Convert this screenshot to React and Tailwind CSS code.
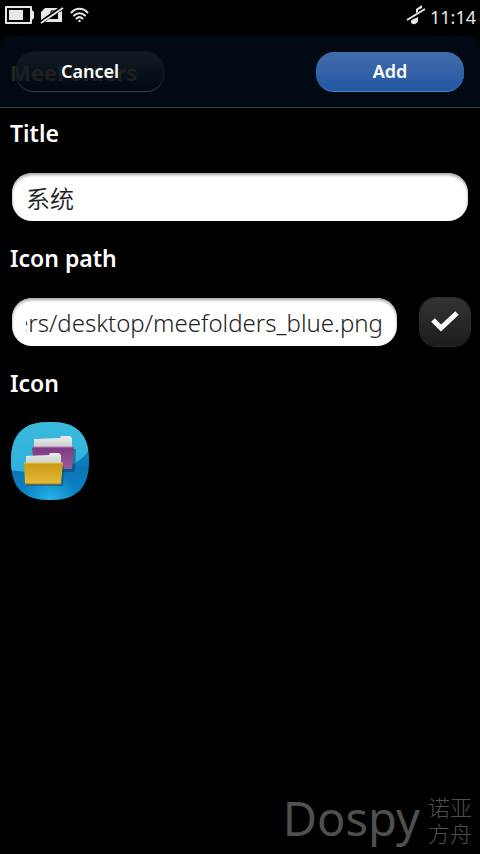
import React, { useEffect, useRef, useState } from 'react';

const BatteryIcon = () => (
  <svg width="30" height="20" viewBox="0 0 30 20" aria-hidden="true">
    <path d="M2 2h25v16H2z" fill="none" stroke="#e9e5e9" strokeWidth="2" strokeLinejoin="round" />
    <path d="M28 5l2 2v6l-2 2z" fill="#e9e5e9" />
    <rect x="5" y="5" width="14" height="10" fill="#e9e5e9" />
  </svg>
);

const NoSimIcon = () => (
  <svg width="24" height="18" viewBox="0 0 24 18" aria-hidden="true">
    <path d="M1 6l4-4h13L1 14z" fill="#e9e5e9" />
    <path d="M22 5v11H5l4-3h9V7z" fill="#e9e5e9" />
    <path d="M11 9V5h4" stroke="#000" strokeWidth="1" fill="none" />
    <path d="M1 17L23 2" stroke="#e9e5e9" strokeWidth="2" />
  </svg>
);

const WifiIcon = () => (
  <svg width="20" height="16" viewBox="0 0 20 16" fill="none" stroke="#e9e5e9" strokeWidth="2" strokeLinecap="round" aria-hidden="true">
    <path d="M1.500 5.500C6 .5 13 .5 17.500 5.500M4 8.500c3-3 8-3 11 0M6.500 11.500c1.800-1.600 4.200-1.600 6 0" />
    <circle cx="9.500" cy="14" r="1.200" fill="#e9e5e9" stroke="none" />
  </svg>
);

const SilentIcon = () => (
  <svg width="20" height="22" viewBox="0 0 20 22" aria-hidden="true">
    <path d="M10 9V5l6-4v3l-4 2v2z" fill="#e9e5e9" />
    <path d="M12 13v4c-1 4-7 4-7 1s3-3 5-4z" fill="#e9e5e9" />
    <path d="M1 16L19 5" stroke="#e9e5e9" strokeWidth="2" />
  </svg>
);

const FolderIcon = () => (
  <svg width="80" height="80" viewBox="0 0 80 80" role="img" aria-label="Folders">
    <defs>
      <linearGradient id="tile" x1="0" y1="0" x2="0" y2="1">
        <stop offset="0" stopColor="#25a5d2" />
        <stop offset="0.6" stopColor="#0b76b8" />
        <stop offset="1" stopColor="#0c83c4" />
      </linearGradient>
      <linearGradient id="gloss" x1="0" y1="0" x2="0" y2="1">
        <stop offset="0" stopColor="#3bbcdc" />
        <stop offset="1" stopColor="#2fb1db" />
      </linearGradient>
      <radialGradient id="glow" cx="0.5" cy="1" r="0.35">
        <stop offset="0" stopColor="#25b4e6" />
        <stop offset="1" stopColor="#25b4e6" stopOpacity="0" />
      </radialGradient>
      <linearGradient id="paper" x1="0" y1="0" x2="0" y2="1">
        <stop offset="0" stopColor="#e9ece9" />
        <stop offset="1" stopColor="#c3cbca" />
      </linearGradient>
      <linearGradient id="purple" x1="0" y1="0" x2="0" y2="1">
        <stop offset="0" stopColor="#7c3a80" />
        <stop offset="1" stopColor="#9a5b9f" />
      </linearGradient>
      <linearGradient id="yellow" x1="0" y1="0" x2="0" y2="1">
        <stop offset="0" stopColor="#c79a17" />
        <stop offset="1" stopColor="#e5ba38" />
      </linearGradient>
      <clipPath id="squircle">
        <path d="M40 2C67 2 79 14 79 41S67 80 40 80 1 68 1 41 13 2 40 2z" />
      </clipPath>
    </defs>
    <g clipPath="url(#squircle)">
      <rect width="80" height="80" fill="url(#tile)" />
      <path d="M0 0h80v28C70 46 45 56 0 50z" fill="url(#gloss)" />
      <rect width="80" height="80" fill="url(#glow)" />
    </g>
    {/* back folder */}
    <path d="M24 29h42l-1 23H26z" fill="#063f66" fillOpacity="0.5" />
    <path d="M24 19l26-1 1-2h9l2 2v11H24z" fill="url(#paper)" />
    <path d="M22 27h42l-2 22H24z" fill="url(#purple)" />
    <path d="M22 27h42" stroke="#b77db9" />
    {/* front folder */}
    <path d="M17 46h37l-1 20H17z" fill="#063f66" fillOpacity="0.5" />
    <path d="M16 36l23-1 1-2h9l2 2v10H16z" fill="url(#paper)" />
    <path d="M14 43h39l-2 21H15z" fill="url(#yellow)" />
    <path d="M14 43h39" stroke="#ebcc5b" />
    <path d="M15 64h36" stroke="#a57c10" />
  </svg>
);

const inputClass =
  "block w-full min-w-0 h-12 px-3.5 rounded-[20px] bg-white text-[#222222] text-[24px] font-['Noto_Sans','Noto_Sans_CJK_SC',sans-serif] shadow-[inset_0_2px_3px_#a8a4a8] outline-none";

const labelClass = 'block h-8 text-[23px] leading-[30px] font-semibold';

const App = () => {
  const [title, setTitle] = useState('系统');
  const [path, setPath] = useState('ers/desktop/meefolders_blue.png');
  const pathRef = useRef(null);

  // Keep the file name visible when the path is longer than the box
  useEffect(() => {
    pathRef.current.scrollLeft = pathRef.current.scrollWidth;
  }, []);

  return (
    <div className="min-h-screen flex flex-col bg-black text-white font-['Noto_Sans','Noto_Sans_CJK_SC',sans-serif]">
      {/* Status bar */}
      <div className="h-9 flex items-center justify-between px-1 pb-1.5">
        <div className="flex items-center gap-1.5">
          <BatteryIcon />
          <NoSimIcon />
          <WifiIcon />
        </div>
        <div className="flex items-center gap-1 text-[#e9e5e9]">
          <SilentIcon />
          <span className="pt-1 text-[18px] leading-6">11:14</span>
        </div>
      </div>

      {/* Sheet header */}
      <header className="relative h-18 flex items-center justify-between px-4 rounded-t-xl bg-[#010a12] border-b border-[#3c4043]">
        <span className="absolute left-2.5 top-5 text-[22px] leading-8 font-bold text-[#2a2421]">MeeFolders</span>
        <button
          type="button"
          className="relative w-[148px] h-10 rounded-[18px] bg-linear-to-b from-[#1b222b]/70 to-[#020a14]/30 border-b border-[#343c48] shadow-[0_0_0_1px_#0b121a] text-lg leading-6 font-semibold"
        >
          Cancel
        </button>
        <button
          type="button"
          className="w-[148px] h-10 rounded-[18px] bg-linear-to-b from-[#416ca9] to-[#2358a4] border-b border-[#4c7fc5] text-lg leading-6 font-semibold"
        >
          Add
        </button>
      </header>

      {/* Form */}
      <main className="flex-1 px-2.5 pt-2.5">
        <div className="h-[125px]">
          <label htmlFor="title" className={labelClass}>Title</label>
          <div className="mt-[23px] px-0.5">
            <input id="title" type="text" value={title} onChange={(e) => setTitle(e.target.value)} className={`${inputClass} font-[350]`} />
          </div>
        </div>

        <div className="h-[125px]">
          <label htmlFor="path" className={labelClass}>Icon path</label>
          <div className="mt-[23px] pl-0.5 flex items-center gap-[23px]">
            <input
              id="path"
              ref={pathRef}
              type="text"
              value={path}
              onChange={(e) => setPath(e.target.value)}
              className={`${inputClass} text-right font-light`}
            />
            <button
              type="button"
              aria-label="Confirm path"
              className="shrink-0 w-[50px] h-12 flex items-center justify-center rounded-2xl bg-linear-to-b from-[#343434] to-[#1c1c1c] shadow-[0_0_0_1px_#2b2b2b]"
            >
              <svg width="30" height="24" viewBox="0 0 30 24" fill="none" stroke="#fff" strokeWidth="5" aria-hidden="true">
                <path d="M3 10l8 8L27 3" />
              </svg>
            </button>
          </div>
        </div>

        <h2 className={labelClass}>Icon</h2>
        <div className="mt-5">
          <FolderIcon />
        </div>
      </main>

      {/* Watermark */}
      <footer className="flex items-start justify-end gap-2 px-2 pb-2 text-[#505050]">
        <span className="text-[47px] leading-[48px]">Dospy</span>
        <span className="w-11 text-[22px] leading-[26px] font-light">诺亚方舟</span>
      </footer>
    </div>
  );
};

export default App;
